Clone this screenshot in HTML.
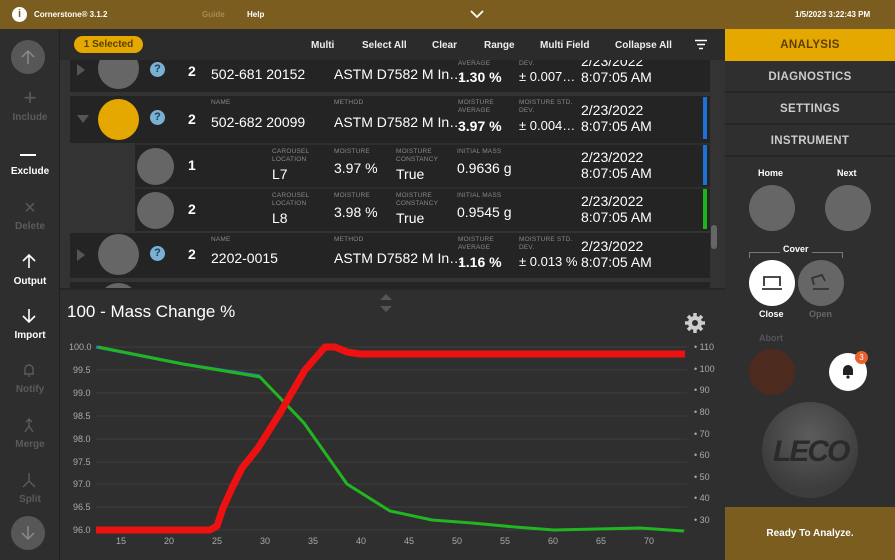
<!DOCTYPE html>
<html><head><meta charset="utf-8"><style>
*{margin:0;padding:0;box-sizing:border-box}
body{width:895px;height:560px;overflow:hidden;background:#2f2f2f;font-family:"Liberation Sans",sans-serif;position:relative;color:#fff}
.a{position:absolute}
.top{left:0;top:0;width:895px;height:29px;background:#7a5d1f}
.side{left:0;top:29px;width:60px;height:531px;background:#2e2e2e;border-right:1px solid #222}
.sb{position:absolute;left:0;width:60px;text-align:center;font-size:10px;font-weight:bold;color:#5b5b5b}
.sb.on{color:#fff}
.ic{position:absolute;left:0;width:60px;text-align:center;font-size:18px;line-height:18px}
.tb{left:60px;top:29px;width:665px;height:31px;background:#2b2b2b}
.tbt{position:absolute;top:11px;font-size:10px;font-weight:bold;color:#eee}
.list{left:60px;top:60px;width:665px;height:230px;background:#333;overflow:hidden}
.row{position:absolute;left:10px;width:640px;background:#242424}
.lbl{position:absolute;font-size:6.5px;color:#888;line-height:8px;letter-spacing:.2px}
.v{position:absolute;font-size:14px;color:#fff}
.b{font-weight:bold}
.circ{position:absolute;border-radius:50%;background:#666}
.q{position:absolute;width:15px;height:15px;border-radius:50%;background:#7ab0d4;color:#1d3c55;font-size:11px;font-weight:bold;text-align:center;line-height:15px}
.rp{left:725px;top:29px;width:170px;height:531px;background:#2f2f2f}
.tab{position:absolute;left:0;width:170px;height:32px;text-align:center;line-height:32px;font-size:11.5px;font-weight:bold;color:#ccc;border-bottom:2px solid #262626;letter-spacing:.3px}
</style></head><body>
<div class="a top">
 <div class="a" style="left:12px;top:7px;width:15px;height:15px;border-radius:50%;background:#fff;color:#7a5d1f;font-size:11px;font-weight:bold;text-align:center;line-height:15px">i</div>
 <div class="a" style="left:34px;top:10px;font-size:8px;font-weight:bold">Cornerstone® 3.1.2</div>
 <div class="a" style="left:202px;top:10px;font-size:8px;font-weight:bold;color:#a58c55">Guide</div>
 <div class="a" style="left:247px;top:10px;font-size:8px;font-weight:bold">Help</div>
 <svg class="a" style="left:470px;top:9px" width="14" height="10"><path d="M1 2 L7 8 L13 2" stroke="#fff" stroke-width="1.8" fill="none"/></svg>
 <div class="a" style="left:795px;top:10px;font-size:8px;font-weight:bold">1/5/2023 3:22:43 PM</div>
</div>
<div class="a side">
 <div class="a" style="left:11px;top:11px;width:34px;height:34px;border-radius:50%;background:#575757"></div>
 <svg class="a" style="left:19px;top:19px" width="18" height="18"><path d="M9 16V3M3 9l6-6 6 6" stroke="#8a8a8a" stroke-width="1.5" fill="none"/></svg>
 <div class="ic" style="top:60px;color:#5b5b5b;font-size:22px">+</div><div class="sb" style="top:83px">Include</div>
 <div class="a" style="left:20px;top:125px;width:16px;height:2px;background:#fff"></div><div class="sb on" style="top:137px">Exclude</div>
 <div class="ic" style="top:170px;color:#5b5b5b;font-size:20px">×</div><div class="sb" style="top:192px">Delete</div>
 <svg class="a" style="left:21px;top:224px" width="16" height="16"><path d="M8 15V2M2 8l6-6 6 6" stroke="#fff" stroke-width="1.6" fill="none"/></svg><div class="sb on" style="top:247px">Output</div>
 <svg class="a" style="left:21px;top:279px" width="16" height="16"><path d="M8 1v13M2 8l6 6 6-6" stroke="#fff" stroke-width="1.6" fill="none"/></svg><div class="sb on" style="top:301px">Import</div>
 <svg class="a" style="left:21px;top:333px" width="16" height="16"><path d="M4 12V7a4 4 0 0 1 8 0v5H3h10M7 14h2" stroke="#5b5b5b" stroke-width="1.4" fill="none"/></svg><div class="sb" style="top:355px">Notify</div>
 <svg class="a" style="left:21px;top:388px" width="16" height="16"><path d="M8 2v7M4 15l4-6 4 6M5 5l3-3 3 3" stroke="#5b5b5b" stroke-width="1.4" fill="none"/></svg><div class="sb" style="top:410px">Merge</div>
 <svg class="a" style="left:21px;top:443px" width="16" height="16"><path d="M8 1v8M2 15l6-6 6 6" stroke="#5b5b5b" stroke-width="1.4" fill="none"/></svg><div class="sb" style="top:465px">Split</div>
 <div class="a" style="left:11px;top:487px;width:34px;height:34px;border-radius:50%;background:#575757"></div>
 <svg class="a" style="left:19px;top:495px" width="18" height="18"><path d="M9 2v13M3 9l6 6 6-6" stroke="#8a8a8a" stroke-width="1.5" fill="none"/></svg>
</div>
<div class="a tb">
 <div class="a" style="left:14px;top:7px;width:69px;height:17px;border-radius:9px;background:#e5a800;color:#5a4200;font-size:10px;font-weight:bold;text-align:center;line-height:17px">1 Selected</div>
 <div class="tbt" style="left:251px">Multi</div>
 <div class="tbt" style="left:302px">Select All</div>
 <div class="tbt" style="left:372px">Clear</div>
 <div class="tbt" style="left:424px">Range</div>
 <div class="tbt" style="left:480px">Multi Field</div>
 <div class="tbt" style="left:555px">Collapse All</div>
 <svg class="a" style="left:634px;top:10px" width="14" height="11"><path d="M1 1.5h12M3 5.5h8M5 9.5h4" stroke="#fff" stroke-width="1.5"/></svg>
</div>
<div class="a list">
 <!-- row 1 partial -->
 <div class="row" style="top:0;height:32px">
  <div class="a" style="left:7px;top:4px;border-left:8px solid #555;border-top:6px solid transparent;border-bottom:6px solid transparent"></div>
  <div class="circ" style="left:28px;top:-12px;width:41px;height:41px"></div>
  <div class="q" style="left:80px;top:2px">?</div>
  <div class="v b" style="left:118px;top:3px">2</div>
  <div class="v" style="left:141px;top:6px">502-681 20152</div>
  <div class="v" style="left:264px;top:6px">ASTM D7582 M In…</div>
  <div class="lbl" style="left:388px;top:0">AVERAGE</div><div class="v b" style="left:388px;top:9px">1.30 %</div>
  <div class="lbl" style="left:449px;top:0">DEV.</div><div class="v" style="left:449px;top:9px;font-size:13px">± 0.007…</div>
  <div class="v" style="left:511px;top:-7px">2/23/2022</div><div class="v" style="left:511px;top:9px">8:07:05 AM</div>
 </div>
 <!-- row 2 -->
 <div class="row" style="top:36px;height:47px">
  <div class="a" style="left:7px;top:19px;border-top:8px solid #555;border-left:6px solid transparent;border-right:6px solid transparent"></div>
  <div class="circ" style="left:28px;top:3px;width:41px;height:41px;background:#e5a800"></div>
  <div class="q" style="left:80px;top:14px">?</div>
  <div class="v b" style="left:118px;top:15px">2</div>
  <div class="lbl" style="left:141px;top:3px">NAME</div><div class="v" style="left:141px;top:18px">502-682 20099</div>
  <div class="lbl" style="left:264px;top:3px">METHOD</div><div class="v" style="left:264px;top:18px">ASTM D7582 M In…</div>
  <div class="lbl" style="left:388px;top:3px">MOISTURE<br>AVERAGE</div><div class="v b" style="left:388px;top:22px">3.97 %</div>
  <div class="lbl" style="left:449px;top:3px">MOISTURE STD.<br>DEV.</div><div class="v" style="left:449px;top:22px;font-size:13px">± 0.004…</div>
  <div class="v" style="left:511px;top:6px">2/23/2022</div><div class="v" style="left:511px;top:22px">8:07:05 AM</div>
  <div class="a" style="left:633px;top:1px;width:4px;height:42px;background:#1a73d9"></div>
 </div>
 <!-- sub rows -->
 <div class="row" style="top:83px;height:44px;left:75px;width:575px;border-top:2px solid #2e2e2e">
  <div class="circ" style="left:2px;top:3px;width:37px;height:37px"></div>
  <div class="v b" style="left:53px;top:12px">1</div>
  <div class="lbl" style="left:137px;top:3px">CAROUSEL<br>LOCATION</div><div class="v" style="left:137px;top:21px">L7</div>
  <div class="lbl" style="left:199px;top:3px">MOISTURE</div><div class="v" style="left:199px;top:15px">3.97 %</div>
  <div class="lbl" style="left:261px;top:3px">MOISTURE<br>CONSTANCY</div><div class="v" style="left:261px;top:21px">True</div>
  <div class="lbl" style="left:322px;top:3px">INITIAL MASS</div><div class="v" style="left:322px;top:15px">0.9636 g</div>
  <div class="v" style="left:446px;top:4px">2/23/2022</div><div class="v" style="left:446px;top:20px">8:07:05 AM</div>
  <div class="a" style="left:568px;top:0;width:4px;height:40px;background:#1a73d9"></div>
 </div>
 <div class="row" style="top:127px;height:44px;left:75px;width:575px;border-top:2px solid #2e2e2e">
  <div class="circ" style="left:2px;top:3px;width:37px;height:37px"></div>
  <div class="v b" style="left:53px;top:12px">2</div>
  <div class="lbl" style="left:137px;top:3px">CAROUSEL<br>LOCATION</div><div class="v" style="left:137px;top:21px">L8</div>
  <div class="lbl" style="left:199px;top:3px">MOISTURE</div><div class="v" style="left:199px;top:15px">3.98 %</div>
  <div class="lbl" style="left:261px;top:3px">MOISTURE<br>CONSTANCY</div><div class="v" style="left:261px;top:21px">True</div>
  <div class="lbl" style="left:322px;top:3px">INITIAL MASS</div><div class="v" style="left:322px;top:15px">0.9545 g</div>
  <div class="v" style="left:446px;top:4px">2/23/2022</div><div class="v" style="left:446px;top:20px">8:07:05 AM</div>
  <div class="a" style="left:568px;top:0;width:4px;height:40px;background:#1cb51c"></div>
 </div>
 <!-- row 3 -->
 <div class="row" style="top:173px;height:45px">
  <div class="a" style="left:7px;top:16px;border-left:8px solid #555;border-top:6px solid transparent;border-bottom:6px solid transparent"></div>
  <div class="circ" style="left:28px;top:1px;width:41px;height:41px"></div>
  <div class="q" style="left:80px;top:13px">?</div>
  <div class="v b" style="left:118px;top:13px">2</div>
  <div class="lbl" style="left:141px;top:3px">NAME</div><div class="v" style="left:141px;top:17px">2202-0015</div>
  <div class="lbl" style="left:264px;top:3px">METHOD</div><div class="v" style="left:264px;top:17px">ASTM D7582 M In…</div>
  <div class="lbl" style="left:388px;top:3px">MOISTURE<br>AVERAGE</div><div class="v b" style="left:388px;top:21px">1.16 %</div>
  <div class="lbl" style="left:449px;top:3px">MOISTURE STD.<br>DEV.</div><div class="v" style="left:449px;top:21px;font-size:13px">± 0.013 %</div>
  <div class="v" style="left:511px;top:5px">2/23/2022</div><div class="v" style="left:511px;top:21px">8:07:05 AM</div>
 </div>
 <div class="row" style="top:222px;height:20px">
  <div class="circ" style="left:28px;top:1px;width:41px;height:41px"></div>
 </div>
 <div class="a" style="left:651px;top:165px;width:6px;height:24px;border-radius:3px;background:#666"></div>
</div>
<!-- chart -->
<svg class="a" style="left:60px;top:288px" width="665" height="272">
 <rect width="665" height="272" fill="#2f2f2f"/>
 <rect width="665" height="2" fill="#262626"/>
 <path d="M326 6l6 6h-12z" fill="#555"/><path d="M326 24l6-6h-12z" fill="#555"/>
 <text x="7" y="29" font-size="17" fill="#fff" font-family="Liberation Sans">100 - Mass Change %</text>
 <g transform="translate(635,35)" fill="#ccc"><circle r="7"/><g stroke="#ccc" stroke-width="3.5"><path d="M0-10V10M-10 0H10M-7-7L7 7M-7 7L7-7"/></g><circle r="3" fill="#2f2f2f"/></g>
 <g stroke="#3c3c3c" stroke-width="1">
  <path d="M36 59H627M36 82H627M36 105H627M36 128H627M36 151H627M36 174H627M36 196H627M36 219H627M36 242H627"/>
 </g>
 <g font-size="9" fill="#aaa" font-family="Liberation Sans">
  <text x="9" y="62">100.0</text><text x="13" y="85">99.5</text><text x="13" y="108">99.0</text><text x="13" y="131">98.5</text><text x="13" y="154">98.0</text><text x="13" y="177">97.5</text><text x="13" y="199">97.0</text><text x="13" y="222">96.5</text><text x="13" y="245">96.0</text>
  <text x="634" y="62">• 110</text><text x="634" y="84">• 100</text><text x="634" y="105">• 90</text><text x="634" y="127">• 80</text><text x="634" y="149">• 70</text><text x="634" y="170">• 60</text><text x="634" y="192">• 50</text><text x="634" y="213">• 40</text><text x="634" y="235">• 30</text>
  <text x="56" y="256">15</text><text x="104" y="256">20</text><text x="152" y="256">25</text><text x="200" y="256">30</text><text x="248" y="256">35</text><text x="296" y="256">40</text><text x="344" y="256">45</text><text x="392" y="256">50</text><text x="440" y="256">55</text><text x="488" y="256">60</text><text x="536" y="256">65</text><text x="584" y="256">70</text>
 </g>
 <polyline fill="none" stroke="#2a78c8" stroke-width="3" points="36,59 123,76 200,88"/>
 <polyline fill="none" stroke="#22b522" stroke-width="3" points="38,59 123,76 200,89 244,135 287,196 330,223 372,232 412,235 455,239 494,242 537,241 580,240 624,243"/>
 <polyline fill="none" stroke="#ee1111" stroke-width="7" stroke-linejoin="round" points="36,242 150,242 157,238 163,220 172,200 182,180 198,160 220,125 245,82 265,59 275,59 287,64 300,66 625,66"/>
</svg>
<!-- right panel -->
<div class="a rp">
 <div class="tab" style="top:0;background:#e5a800;color:#5a3f00;height:32px;border:none">ANALYSIS</div>
 <div class="tab" style="top:32px">DIAGNOSTICS</div>
 <div class="tab" style="top:64px">SETTINGS</div>
 <div class="tab" style="top:96px">INSTRUMENT</div>
 <div class="a" style="left:33px;top:139px;font-size:9px;font-weight:bold">Home</div>
 <div class="a" style="left:112px;top:139px;font-size:9px;font-weight:bold">Next</div>
 <div class="a" style="left:24px;top:156px;width:46px;height:46px;border-radius:50%;background:#666"></div>
 <div class="a" style="left:100px;top:156px;width:46px;height:46px;border-radius:50%;background:#666"></div>
 <div class="a" style="left:24px;top:223px;width:94px;height:6px;border:1px solid #777;border-bottom:none"></div>
 <div class="a" style="left:55px;top:215px;font-size:9px;font-weight:bold;background:#2f2f2f;padding:0 3px">Cover</div>
 <div class="a" style="left:24px;top:231px;width:46px;height:46px;border-radius:50%;background:#fff"></div>
 <svg class="a" style="left:36px;top:243px" width="22" height="22"><path d="M3 14V5h16v9M1 17h20" stroke="#333" stroke-width="1.8" fill="none"/></svg>
 <div class="a" style="left:73px;top:231px;width:46px;height:46px;border-radius:50%;background:#666"></div>
 <svg class="a" style="left:85px;top:243px" width="22" height="22"><path d="M4 13L2 6l10-3 3 6M3 17h16" stroke="#333" stroke-width="1.8" fill="none"/></svg>
 <div class="a" style="left:34px;top:280px;font-size:9px;font-weight:bold">Close</div>
 <div class="a" style="left:84px;top:280px;font-size:9px;font-weight:bold;color:#666">Open</div>
 <div class="a" style="left:34px;top:304px;font-size:9px;font-weight:bold;color:#555">Abort</div>
 <div class="a" style="left:24px;top:320px;width:46px;height:46px;border-radius:50%;background:#4d2a1e"></div>
 <div class="a" style="left:104px;top:324px;width:38px;height:38px;border-radius:50%;background:#fff"></div>
 <svg class="a" style="left:115px;top:334px" width="16" height="16"><path d="M3 12V7a5 5 0 0 1 10 0v5H2h12z" fill="#222"/><circle cx="8" cy="14" r="1.6" fill="#222"/></svg>
 <div class="a" style="left:130px;top:322px;width:13px;height:13px;border-radius:50%;background:#e8622a;font-size:8px;text-align:center;line-height:13px">3</div>
 <div class="a" style="left:37px;top:373px;width:96px;height:96px;border-radius:50%;background:radial-gradient(circle at 50% 35%,#5c5c5c,#3c3c3c 70%)"></div>
 <div class="a" style="left:48px;top:406px;font-size:30px;font-weight:bold;font-style:italic;color:#2a2a2a;letter-spacing:-2px">LECO</div>
 <div class="a" style="left:0;top:478px;width:170px;height:53px;background:#7a5d1f;font-size:10px;font-weight:bold;text-align:center;line-height:53px">Ready To Analyze.</div>
</div>
</body></html>
